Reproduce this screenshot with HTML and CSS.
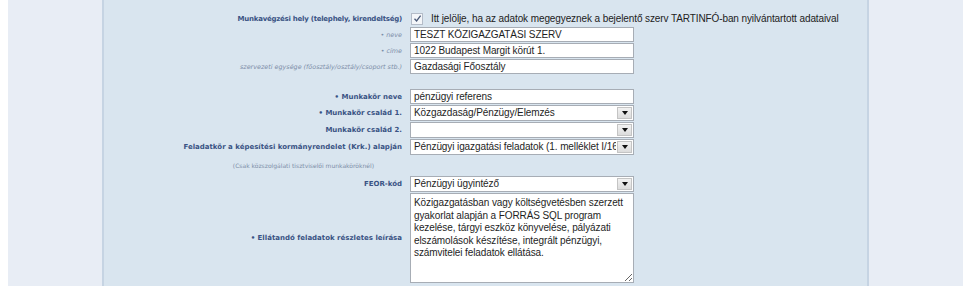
FILE: index.html
```html
<!DOCTYPE html>
<html lang="hu">
<head>
  <meta charset="UTF-8">
  <title>Munkakör adatai</title>
  <link rel="stylesheet" href="styles.css">
</head>
<body>
  <div id="page">
    <div class="side"></div>
    <div id="content">
      <div class="row check-row">
        <label class="lbl first">Munkavégzési hely (telephely, kirendeltség)</label>
        <div class="field">
          <span class="checkbox">
            <svg width="9" height="9" viewBox="0 0 9 9"><path d="M1.5 4.8 L3.6 7 L7.6 1.6" fill="none" stroke="#4a5a78" stroke-width="1.3"/></svg>
          </span>
          <span class="check-text">Itt jelölje, ha az adatok megegyeznek a bejelentő szerv TARTINFÓ-ban nyilvántartott adataival</span>
        </div>
      </div>
      <div class="row">
        <label class="lbl sub">&bull; neve</label>
        <input type="text" class="inp" value="TESZT KÖZIGAZGATÁSI SZERV">
      </div>
      <div class="row">
        <label class="lbl sub">&bull; címe</label>
        <input type="text" class="inp" value="1022 Budapest Margit körút 1.">
      </div>
      <div class="row">
        <label class="lbl sub">szervezeti egysége (főosztály/osztály/csoport stb.)</label>
        <input type="text" class="inp" value="Gazdasági Főosztály">
      </div>

      <div class="row gap-top">
        <label class="lbl">&bull; Munkakör neve</label>
        <input type="text" class="inp" value="pénzügyi referens">
      </div>
      <div class="row tall">
        <label class="lbl">&bull; Munkakör család 1.</label>
        <div class="sel"><span class="val">Közgazdaság/Pénzügy/Elemzés</span><span class="arrow"></span></div>
      </div>
      <div class="row tall">
        <label class="lbl">Munkakör család 2.</label>
        <div class="sel"><span class="val"></span><span class="arrow"></span></div>
      </div>
      <div class="row tall">
        <label class="lbl">Feladatkör a képesítési kormányrendelet (Krk.) alapján</label>
        <div class="sel"><span class="val">Pénzügyi igazgatási feladatok (1. melléklet I/16)</span><span class="arrow"></span></div>
      </div>
      <div class="row note-row">
        <label class="lbl note">(Csak közszolgálati tisztviselői munkaköröknél)</label>
      </div>
      <div class="row tall">
        <label class="lbl">FEOR-kód</label>
        <div class="sel"><span class="val">Pénzügyi ügyintéző</span><span class="arrow"></span></div>
      </div>
      <div class="row area-row">
        <label class="lbl">&bull; Ellátandó feladatok részletes leírása</label>
        <textarea class="area" wrap="off">Közigazgatásban vagy költségvetésben szerzett
gyakorlat alapján a FORRÁS SQL program
kezelése, tárgyi eszköz könyvelése, pályázati
elszámolások készítése, integrált pénzügyi,
számvitelei feladatok ellátása.</textarea>
      </div>
    </div>
    <div class="side"></div>
  </div>
</body>
</html>
```
FILE: styles.css
```css
/* Page frame */
body {
  margin: 0;
  background-color: #fff;
  font-family: "DejaVu Sans", Verdana, sans-serif;
}

#page {
  display: flex;
  margin: 0 4px 0 8px;
  height: 286px;
}

.side {
  width: 94px;
  background-color: #e8edf5;
}

#content {
  flex: 1;
  background-color: #d9e5ef;
  border-left: 2px solid #c6d4e3;
  border-right: 2px solid #c6d4e3;
  padding-top: 11px;
}

/* Form rows */
.row {
  display: flex;
  align-items: center;
  height: 15px;
  margin-bottom: 1px;
}

.row.tall {
  height: 16px;
}

.row.note-row {
  height: 19px;
}

.row.gap-top {
  margin-top: 15px;
}

.lbl {
  width: 298px;
  margin-right: 8px;
  text-align: right;
  font-size: 7px;
  font-weight: bold;
  color: #3a5384;
  white-space: nowrap;
}

.lbl.first {
  letter-spacing: -0.25px;
}

.lbl.sub {
  font-weight: normal;
  font-style: italic;
  color: #7d8ea8;
  font-size: 6.4px;
}

.lbl.note {
  font-weight: normal;
  color: #7d8ea8;
  font-size: 6px;
  padding-right: 28px;
  box-sizing: border-box;
}

.field {
  display: flex;
  align-items: center;
}

.checkbox {
  display: inline-flex;
  align-items: center;
  justify-content: center;
  width: 10px;
  height: 10px;
  border: 1px solid #b4bcc8;
  background-color: #f4f6f9;
  margin-left: 1px;
  margin-right: 8px;
}

.check-text {
  font-family: "Liberation Sans", Arial, sans-serif;
  font-size: 10px;
  letter-spacing: -0.1px;
  color: #222;
}

/* Inputs */
.inp, .sel, .area {
  box-sizing: border-box;
  width: 224px;
  border: 1px solid #a7adb5;
  background-color: #fff;
  font-family: "Liberation Sans", Arial, sans-serif;
  font-size: 10px;
  letter-spacing: -0.1px;
  color: #1e1e1e;
}

.inp {
  height: 15px;
  padding: 0 3px;
  margin: 0;
  outline: none;
}

.sel {
  display: flex;
  height: 16px;
  overflow: hidden;
}

.sel .val {
  flex: 1;
  padding: 0 3px;
  white-space: nowrap;
  overflow: hidden;
  line-height: 14px;
}

.sel .arrow {
  width: 13px;
  margin: 1px;
  border: 1px solid #c4c4c4;
  background: linear-gradient(#f2f2f2, #dcdcdc);
  display: flex;
  align-items: center;
  justify-content: center;
}

.sel .arrow::after {
  content: "";
  border-left: 3px solid transparent;
  border-right: 3px solid transparent;
  border-top: 4px solid #111;
}

.area-row {
  height: 90px;
}

.area {
  height: 90px;
  margin: 0;
  padding: 3px 3px;
  line-height: 12.5px;
  resize: both;
  overflow: hidden;
}
```
